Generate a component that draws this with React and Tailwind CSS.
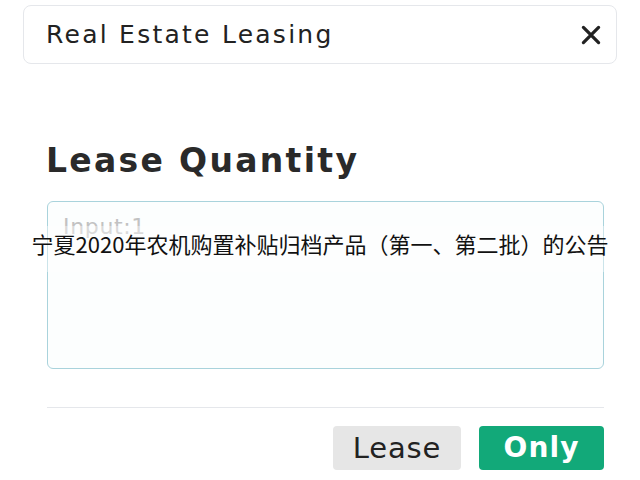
import React from 'react';

export default function App() {
  return (
    <div className="relative w-[640px] h-[480px] overflow-hidden bg-white" style={{ fontFamily: '"DejaVu Sans", sans-serif' }}>
      {/* Header */}
      <div className="mx-[23px] mt-[5px] h-[59px] rounded-lg border border-gray-200 flex items-center justify-between pl-[22px] pr-[12px]">
        <span className="text-[25px] tracking-[0.09em] text-[#222]">Real Estate Leasing</span>
        <svg width="26" height="26" viewBox="0 0 24 24" fill="none" stroke="#222" strokeWidth="3" strokeLinecap="round">
          <path d="M5 5L19 19M19 5L5 19" />
        </svg>
      </div>

      {/* Body */}
      <div className="pl-[47px] pr-[36px]">
        <h2 className="mt-[80px] text-[33px] font-semibold tracking-[0.07em] text-[#2a2a2a] leading-none -ml-[1px]">Lease Quantity</h2>
        <div className="mt-[24px] h-[168px] rounded-md border border-[#a9d3dc] bg-[#fcfefe] px-[15px] pt-[8px]">
          <span className="text-[22px] tracking-[0.03em] text-[#c2c2c2]">Input:1</span>
        </div>
        <div className="mt-[38px] h-px bg-gray-200" />
        <div className="mt-[18px] flex justify-end gap-[18px]">
          <button className="w-[128px] h-[44px] rounded bg-[#e6e6e6] text-[29px] tracking-[0.03em] text-[#222] leading-none">Lease</button>
          <button className="w-[125px] h-[44px] rounded bg-[#12a979] text-[28px] font-bold tracking-[0.04em] text-white leading-none">Only</button>
        </div>
      </div>

      {/* Caption overlay */}
      <div
        className="absolute left-0 right-0 top-[226px] h-[46px] bg-white/40 text-center text-[22px] text-[#111] leading-[34px]"
        style={{ fontFamily: '"Noto Sans CJK SC", sans-serif' }}
      >
        宁夏2020年农机购置补贴归档产品（第一、第二批）的公告
      </div>
    </div>
  );
}
